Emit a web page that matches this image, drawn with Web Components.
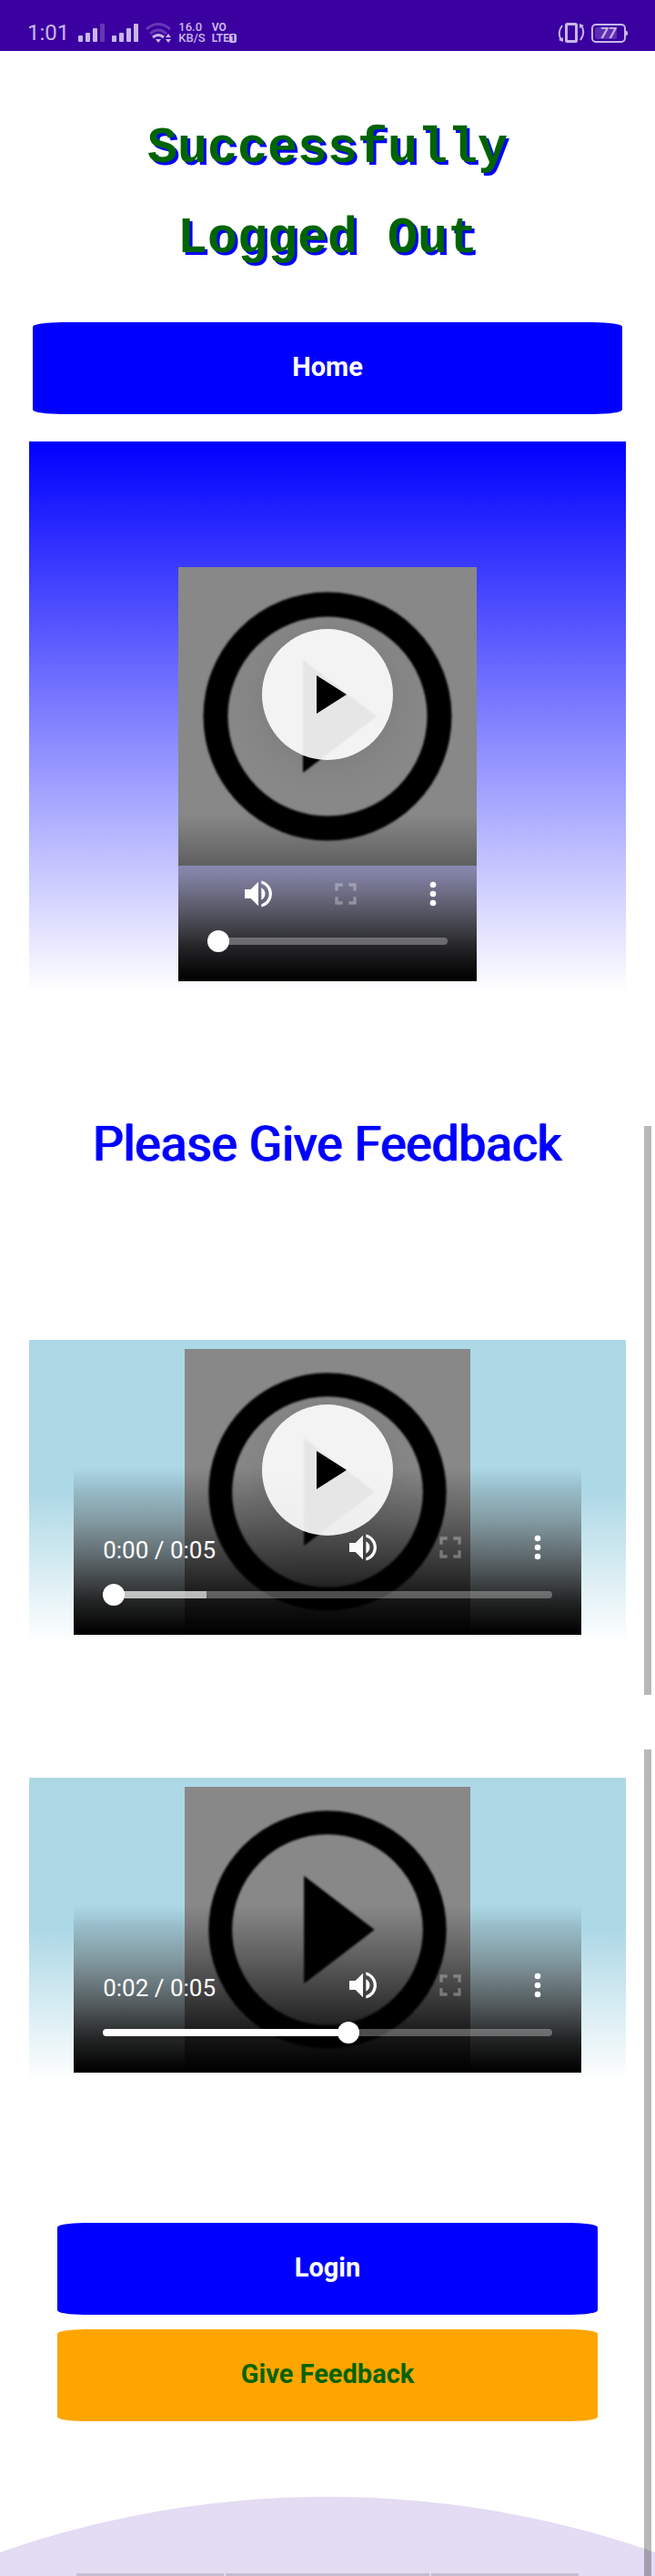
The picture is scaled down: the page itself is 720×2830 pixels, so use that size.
<!DOCTYPE html>
<html lang="en">
<head>
<meta charset="utf-8">
<meta name="viewport" content="width=device-width, initial-scale=1">
<title>Logged Out</title>
<style>
  body { margin: 0; background: #fff; font-family: Roboto, "Liberation Sans", sans-serif; }
</style>
</head>
<body>
<logout-page></logout-page>

<template id="status-bar">
  <style>
    :host { display: flex; align-items: flex-end; justify-content: space-between; height: 56px; padding: 0 30px 8px; box-sizing: border-box; background: #3a00a0; color: #c9b6e8; }
    .group { display: flex; align-items: center; gap: 7px; height: 24px; }
    .time { font-size: 24px; line-height: 24px; margin-right: 3px; }
    .stack { display: flex; flex-direction: column; font-weight: 500; font-size: 13px; line-height: 12px; }
    .net { font-weight: 700; font-size: 12px; }
    .net span { display: flex; align-items: center; }
    .net b { width: 8px; height: 10px; border-radius: 2px; background: #c9b6e8; color: #3a00a0; font-size: 9px; line-height: 10px; text-align: center; }
    .battery { position: relative; display: flex; width: 40px; height: 21px; }
    .battery span { position: absolute; left: 0; width: 37px; text-align: center; font-size: 16px; line-height: 21px; font-weight: 700; font-style: italic; }
    svg { display: block; }
  </style>
  <div class="group">
    <span class="time">1:01</span>
    <svg width="30" height="22" viewBox="0 0 30 22" fill="currentColor"><rect y="14" width="5" height="7" rx="1"/><rect x="8" y="11" width="5" height="10" rx="1"/><rect x="16" y="6" width="5" height="15" rx="1"/><rect x="24" y="1" width="5" height="20" rx="1" opacity=".3"/></svg>
    <svg width="30" height="22" viewBox="0 0 30 22" fill="currentColor"><rect y="14" width="5" height="7" rx="1"/><rect x="8" y="11" width="5" height="10" rx="1"/><rect x="16" y="6" width="5" height="15" rx="1"/><rect x="24" y="1" width="5" height="20" rx="1"/></svg>
    <svg width="29" height="22" viewBox="0 0 29 22" fill="none" stroke="currentColor" stroke-width="3"><g opacity=".3"><path d="M1 7Q14-4 27 7"/><path d="M5 12Q14 4 23 12"/></g><path d="M8 16Q14 11 20 16"/><path d="M11 18h6l-3 4zM22 16l3-4 3 4zM22 18h6l-3 4z" fill="currentColor" stroke="none"/></svg>
    <span class="stack"><span>16.0</span><span>KB/S</span></span>
    <span class="stack net"><span>VO</span><span>LTE<b>1</b></span></span>
  </div>
  <div class="group">
    <svg width="30" height="24" viewBox="0 0 30 24" fill="none" stroke="currentColor" stroke-width="2"><rect x="9.500" y="2.500" width="11" height="19" rx="1" stroke-width="3"/><path d="M5 4Q-1 12 4 20M25 20Q31 12 26 4"/><path d="M1 20l5-3v5zM29 4l-5 3V2z" fill="currentColor" stroke="none"/></svg>
    <div class="battery"><svg width="40" height="21" viewBox="0 0 40 21"><rect x="1" y="1" width="36" height="19" rx="4" fill="none" stroke="currentColor" stroke-width="2"/><rect x="4" y="4" width="24" height="13" rx="2" fill="currentColor" opacity=".25"/><path d="M38 8h1l1 1v3l-1 1h-1z" fill="currentColor"/></svg><span>77</span></div>
  </div>
</template>

<template id="action-button">
  <style>
    :host { display: block; }
    button { display: block; width: 100%; height: 101px; border: 0; border-radius: 5%; background: var(--fill, #00f); color: var(--ink, #fff); font: 700 29px/34px Roboto, sans-serif; padding: 0 0 4px; }
  </style>
  <button type="button"><slot></slot></button>
</template>

<template id="video-player">
  <style>
    :host { display: block; position: relative; width: 85%; height: 314px; margin: 0 auto; color: #fff; }
    :host([compact]) { width: 50%; height: 455px; }
    .poster { display: block; width: 314px; height: 314px; margin: 0 auto; }
    :host([compact]) .poster { width: 100%; height: auto; }
    .controls { position: absolute; inset: auto 0 0; height: 184px; box-sizing: border-box; padding-top: 64px; background: linear-gradient(rgba(0,0,0,0), rgba(0,0,0,.3) 31%, rgba(0,0,0,.68) 65%, rgba(0,0,0,.85) 80%, #000 99%); }
    .row { display: flex; align-items: center; justify-content: flex-end; height: 48px; padding-left: 32px; }
    .time { flex: 1; font-size: 26px; line-height: 32px; padding-top: 6px; }
    :host([compact]) .time { display: none; }
    .row button { width: 96px; height: 48px; padding: 0; border: 0; background: none; color: inherit; display: grid; place-items: center; }
    .row button:disabled { opacity: .3; }
    input { -webkit-appearance: none; appearance: none; display: block; width: calc(100% - 64px); height: 24px; margin: 16px 32px 0; background: none; }
    input::-webkit-slider-runnable-track { height: 8px; border-radius: 4px; background: linear-gradient(90deg, #fff var(--played), rgba(255,255,255,.7) var(--played) var(--loaded), rgba(255,255,255,.3) var(--loaded)); }
    input::-webkit-slider-thumb { -webkit-appearance: none; width: 24px; height: 24px; margin-top: -8px; border-radius: 50%; background: #fff; }
    .play { position: absolute; left: calc(50% - 72px); top: 61px; width: 144px; height: 144px; padding: 0; border: 0; border-radius: 50%; background: rgba(255,255,255,.9); box-shadow: 0 4px 40px rgba(0,0,0,.1); }
    :host([compact]) .play { top: 68px; }
    :host([playing]) .play { display: none; }
    svg { display: block; }
  </style>
  <svg class="poster" viewBox="0 0 328 328"><defs><filter id="soft"><feGaussianBlur stdDeviation="1"/></filter></defs><rect width="328" height="328" fill="#888"/><g filter="url(#soft)"><circle cx="164" cy="164" r="123" fill="none" stroke="#000" stroke-width="27"/><path d="M137 102 218 164 137 226z"/></g></svg>
  <div class="controls">
    <div class="row">
      <span class="time"></span>
      <button type="button" aria-label="Mute"><svg width="40" height="40" viewBox="0 0 24 24" fill="currentColor"><path d="M3 9v6h4l5 5V4L7 9H3zm13.500 3c0-1.770-1.020-3.290-2.500-4.030v8.050c1.480-.730 2.500-2.250 2.500-4.020zM14 3.230v2.060c2.890.860 5 3.540 5 6.710s-2.110 5.850-5 6.710v2.060c4.010-.910 7-4.490 7-8.770s-2.990-7.860-7-8.770z"/></svg></button>
      <button type="button" aria-label="Full screen" disabled><svg width="40" height="40" viewBox="0 0 24 24" fill="currentColor"><path d="M7 14H5v5h5v-2H7v-3zm-2-4h2V7h3V5H5v5zm12 7h-3v2h5v-5h-2v3zM14 5v2h3v3h2V5h-5z"/></svg></button>
      <button type="button" aria-label="More"><svg width="40" height="40" viewBox="0 0 24 24" fill="currentColor"><circle cx="12" cy="6" r="2"/><circle cx="12" cy="12" r="2"/><circle cx="12" cy="18" r="2"/></svg></button>
    </div>
    <input type="range" min="0" max="100" aria-label="Position">
  </div>
  <button class="play" type="button" aria-label="Play"><svg width="144" height="144" viewBox="0 0 144 144"><path d="M60 51 93 72 60 93z"/></svg></button>
</template>

<template id="scroll-panel">
  <style>
    :host { display: flow-root; position: relative; }
    i { position: absolute; top: 0; bottom: 0; right: 4px; width: 8px; background: rgba(0,0,0,.28); }
  </style>
  <slot></slot><i></i>
</template>

<template id="page-footer">
  <style>
    :host { display: block; }
    svg { display: block; width: 100%; }
  </style>
  <svg viewBox="0 0 720 87"><circle cx="360" cy="1093" r="1093" fill="#e3dcf2"/><g fill="#c4bed2"><path d="M84 87v-2l1-1h161v3zM248 84h224v3h-224zM474 84h161l1 1v2h-162z"/></g></svg>
</template>

<template id="logout-page">
  <style>
    :host { display: block; }
    h1 { margin: 58px 130px 42px; text-align: center; font: 700 55px/99px "Liberation Mono", monospace; color: #006400; text-shadow: 3px 3px 0 #00f; }
    h2 { margin: 0 0 195px; text-align: center; font: 400 53px/40px Roboto, sans-serif; color: #00f; text-shadow: 1px 0 0 #00f, -1px 0 1px #00f; }
    .home { margin: 0 36px 30px; }
    .hero { margin: 0 32px 147px; height: 605px; box-sizing: border-box; padding-top: 138px; background: linear-gradient(#00f, #fff); }
    .stage { margin: 0 32px; height: 333px; box-sizing: border-box; padding-top: 10px; background: linear-gradient(#add8e6 50%, #fff); }
    .first { margin-bottom: 60px; height: 625px; }
    .second { padding-top: 31px; }
    .actions { display: grid; gap: 16px; margin: 156px 63px 83px; }
    .feedback { --fill: #ffa500; --ink: #006400; }
  </style>
  <status-bar></status-bar>
  <main>
    <h1>Successfully Logged Out</h1>
    <action-button class="home">Home</action-button>
    <div class="hero"><video-player compact value="0" loaded="0"></video-player></div>
    <scroll-panel class="first">
      <h2>Please Give Feedback</h2>
      <div class="stage"><video-player time="0:00 / 0:05" value="0" loaded="23"></video-player></div>
    </scroll-panel>
    <scroll-panel class="second">
      <div class="stage"><video-player playing time="0:02 / 0:05" value="55" loaded="55"></video-player></div>
      <div class="actions">
        <action-button>Login</action-button>
        <action-button class="feedback">Give Feedback</action-button>
      </div>
      <page-footer></page-footer>
    </scroll-panel>
  </main>
</template>

<script>
  class TemplateElement extends HTMLElement {
    constructor() {
      super();
      this.attachShadow({ mode: "open" }).append(document.getElementById(this.localName).content.cloneNode(true));
    }
  }
  class VideoPlayer extends TemplateElement {
    connectedCallback() {
      const value = this.getAttribute("value");
      const slider = this.shadowRoot.querySelector("input");
      this.shadowRoot.querySelector(".time").textContent = this.getAttribute("time") || "";
      slider.value = value;
      slider.style.setProperty("--played", value + "%");
      slider.style.setProperty("--loaded", this.getAttribute("loaded") + "%");
    }
  }
  customElements.define("status-bar", class extends TemplateElement {});
  customElements.define("action-button", class extends TemplateElement {});
  customElements.define("scroll-panel", class extends TemplateElement {});
  customElements.define("page-footer", class extends TemplateElement {});
  customElements.define("video-player", VideoPlayer);
  customElements.define("logout-page", class extends TemplateElement {});
</script>
</body>
</html>
